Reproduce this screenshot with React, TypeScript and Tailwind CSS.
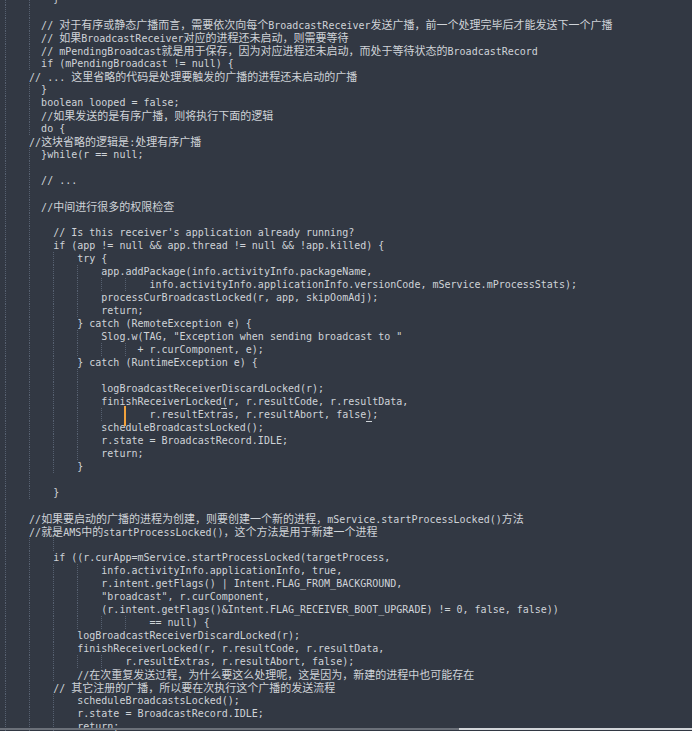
import React from "react";

const lines: string[] = [
  "        }",
  "",
  "      // 对于有序或静态广播而言，需要依次向每个BroadcastReceiver发送广播，前一个处理完毕后才能发送下一个广播",
  "      // 如果BroadcastReceiver对应的进程还未启动，则需要等待",
  "      // mPendingBroadcast就是用于保存，因为对应进程还未启动，而处于等待状态的BroadcastRecord",
  "      if (mPendingBroadcast != null) {",
  "    // ... 这里省略的代码是处理要触发的广播的进程还未启动的广播",
  "      }",
  "      boolean looped = false;",
  "      //如果发送的是有序广播，则将执行下面的逻辑",
  "      do {",
  "    //这块省略的逻辑是:处理有序广播",
  "      }while(r == null;",
  "",
  "      // ...",
  "",
  "      //中间进行很多的权限检查",
  "",
  "        // Is this receiver's application already running?",
  "        if (app != null && app.thread != null && !app.killed) {",
  "            try {",
  "                app.addPackage(info.activityInfo.packageName,",
  "                        info.activityInfo.applicationInfo.versionCode, mService.mProcessStats);",
  "                processCurBroadcastLocked(r, app, skipOomAdj);",
  "                return;",
  "            } catch (RemoteException e) {",
  "                Slog.w(TAG, \"Exception when sending broadcast to \"",
  "                      + r.curComponent, e);",
  "            } catch (RuntimeException e) {",
  "",
  "                logBroadcastReceiverDiscardLocked(r);",
  "                finishReceiverLocked(r, r.resultCode, r.resultData,",
  "                        r.resultExtras, r.resultAbort, false);",
  "                scheduleBroadcastsLocked();",
  "                r.state = BroadcastRecord.IDLE;",
  "                return;",
  "            }",
  "",
  "        }",
  "",
  "    //如果要启动的广播的进程为创建，则要创建一个新的进程，mService.startProcessLocked()方法",
  "    //就是AMS中的startProcessLocked()，这个方法是用于新建一个进程",
  "",
  "        if ((r.curApp=mService.startProcessLocked(targetProcess,",
  "                info.activityInfo.applicationInfo, true,",
  "                r.intent.getFlags() | Intent.FLAG_FROM_BACKGROUND,",
  "                \"broadcast\", r.curComponent,",
  "                (r.intent.getFlags()&Intent.FLAG_RECEIVER_BOOT_UPGRADE) != 0, false, false))",
  "                        == null) {",
  "            logBroadcastReceiverDiscardLocked(r);",
  "            finishReceiverLocked(r, r.resultCode, r.resultData,",
  "                    r.resultExtras, r.resultAbort, false);",
  "            //在次重复发送过程，为什么要这么处理呢，这是因为，新建的进程中也可能存在",
  "        // 其它注册的广播，所以要在次执行这个广播的发送流程",
  "            scheduleBroadcastsLocked();",
  "            r.state = BroadcastRecord.IDLE;",
  "            return;",
];

const blankGuides: Record<number, number[]> = {
  1: [0, 4],
  13: [0, 4],
  15: [0, 4],
  17: [0, 4],
  29: [0, 4, 8, 12],
  37: [0, 4],
  39: [0],
  42: [0, 4, 8],
};

const CJK = /([\u3000-\u303f\u3400-\u9fff\uff00-\uffef]+)/;

function guidesFor(i: number, line: string): number[] {
  if (line.trim() === "") return blankGuides[i] ?? [];
  const indent = line.length - line.trimStart().length;
  const out: number[] = [];
  for (let c = 0; c < indent; c += 4) out.push(c);
  return out;
}

function renderText(line: string) {
  const parts = line.split(CJK);
  return parts.map((p, idx) =>
    idx % 2 === 1 ? (
      <span
        key={idx}
        className="font-['Noto_Sans_CJK_SC',sans-serif] text-[11px] leading-[13px]"
      >
        {p}
      </span>
    ) : (
      <span key={idx}>{p}</span>
    )
  );
}

export default function App() {
  return (
    <div className="relative w-[692px] h-[731px] overflow-hidden bg-[#323843]">
      <div className="-mt-[8px] pl-[5px] font-['DejaVu_Sans_Mono',monospace] text-[10px] leading-[13px] text-[#cfd3d8]">
        {lines.map((line, i) => (
          <div key={i} className="relative h-[13px] whitespace-pre">
            {guidesFor(i, line).map((c) => (
              <span
                key={c}
                className="absolute top-0 h-[13px] border-l border-dotted border-[#566070]"
                style={{ left: c * 6 }}
              />
            ))}
            <span className="relative">{renderText(line)}</span>
          </div>
        ))}
      </div>
      {/* text cursor */}
      <div className="absolute left-[124px] top-[406px] w-[2px] h-[20px] bg-[#f2a23c]" />
      {/* bracket match underlines */}
      <div className="absolute left-[221px] top-[408px] w-[6px] h-[1px] bg-[#cfd3d8]" />
      <div className="absolute left-[366px] top-[421px] w-[6px] h-[1px] bg-[#cfd3d8]" />
      {/* horizontal scrollbar */}
      <div className="absolute left-0 right-0 bottom-[1px] h-[2px] flex">
        <div className="w-[459px] bg-[#6b7079]" />
        <div className="flex-1 bg-[#d2d5d9]" />
      </div>
    </div>
  );
}
